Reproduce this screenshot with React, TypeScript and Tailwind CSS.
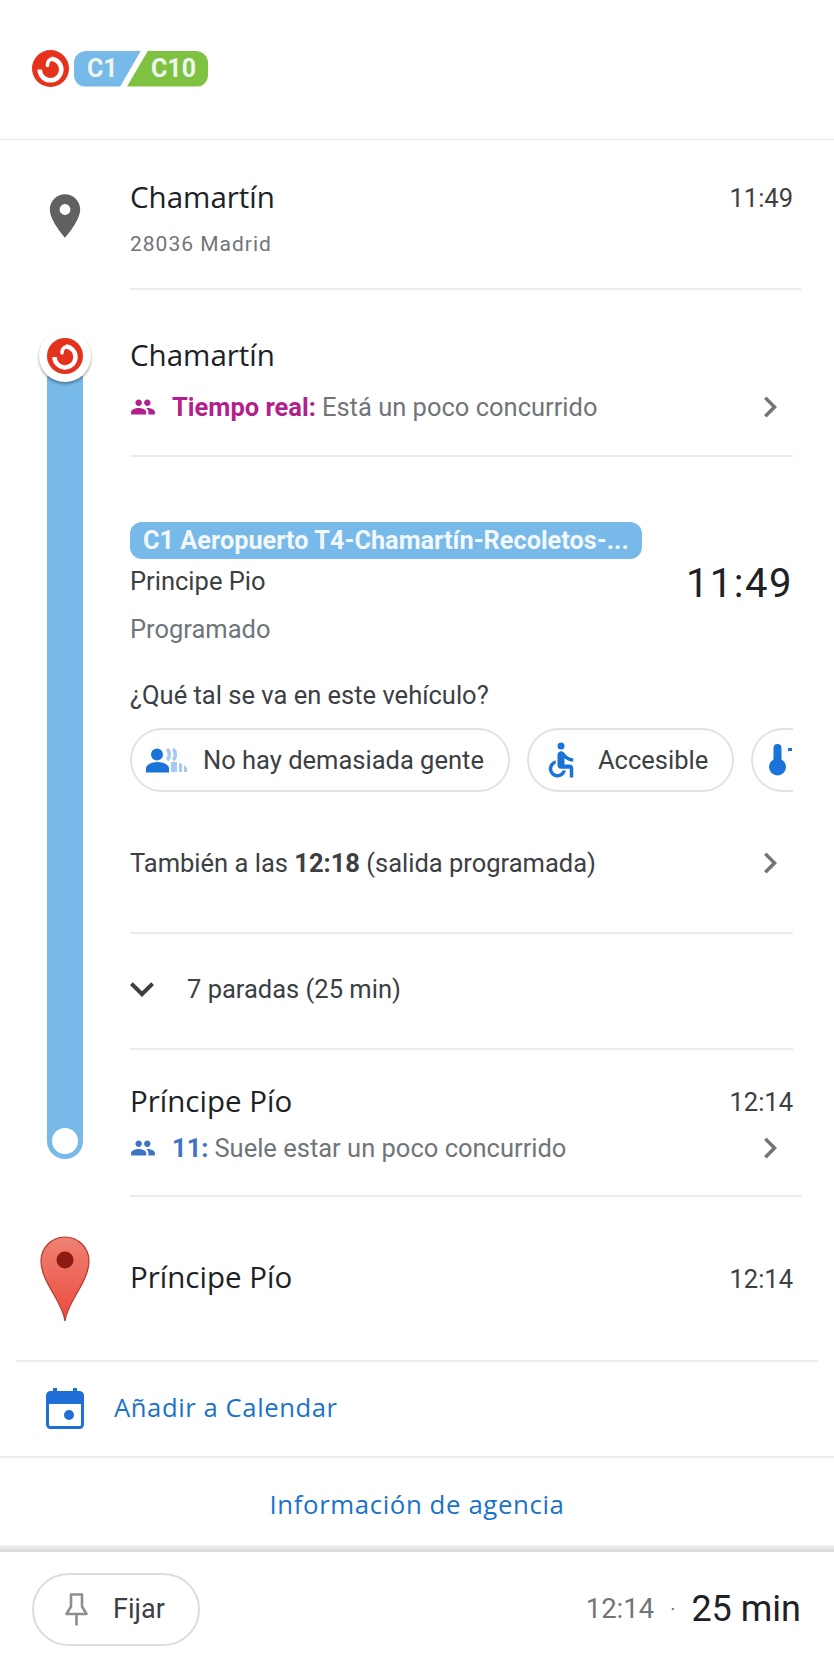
import { MdPeople, MdPlace, MdChevronRight, MdExpandMore, MdAccessible } from 'react-icons/md'

const roboto = { fontFamily: 'Roboto, sans-serif' }
const titleFont = { fontFamily: 'Open Sans, sans-serif' }

function LineLogo({ size }: { size: number }) {
  return (
    <svg width={size} height={size} viewBox="0 0 36 36" className="block shrink-0">
      <circle cx="18" cy="18" r="18" fill="#e4321c" />
      <path d="M7.500 19 A10.500 10.500 0 1 0 19 8.500" fill="none" stroke="#fff" strokeWidth="4.500" />
      <path d="M20 8.500 Q15 9.500 15 15" fill="none" stroke="#fff" strokeWidth="3.500" strokeLinecap="round" />
    </svg>
  )
}

function CrowdIcon() {
  return (
    <svg width="41" height="25" viewBox="0 0 41 25" className="shrink-0">
      <path d="M21 1c3 2 3 9 0 11M27 1c3 2 3 9 0 11" fill="none" stroke="#a6c8f2" strokeWidth="3.500" />
      <path d="M25 14h6v10h-6zM33 15l3 1v8h-3zM38 17l3 3v4h-3z" fill="#a6c8f2" />
      <circle cx="11" cy="6.500" r="6" fill="#1a73d8" />
      <path d="M0 24.500v-4c0-4 6-6.500 11.500-6.500s11.500 2.500 11.500 6.500v4z" fill="#1a73d8" />
    </svg>
  )
}

function ThermoIcon() {
  return (
    <svg width="24" height="32" viewBox="0 0 24 32" className="shrink-0">
      <rect x="4.500" y="0" width="8" height="22" rx="4" fill="#1a73d8" />
      <circle cx="8.500" cy="23" r="8.500" fill="#1a73d8" />
      <rect x="19" y="4" width="4" height="3" fill="#1a73d8" />
    </svg>
  )
}

function PinIcon() {
  return (
    <svg width="23" height="33" viewBox="0 0 23 33" className="shrink-0" fill="none" stroke="#8e8e8e" strokeWidth="2.600">
      <path d="M5 1.500h13M6 1.500v12l-4.500 7.500h20l-4.500-7.500v-12" strokeLinejoin="round" />
      <path d="M11.500 21v11.500" />
    </svg>
  )
}

function CalendarIcon() {
  return (
    <svg width="38" height="41" viewBox="0 0 38 41" className="shrink-0">
      <rect x="7" y="0" width="4" height="6" fill="#1f6fd6" />
      <rect x="27" y="0" width="4" height="6" fill="#1f6fd6" />
      <rect x="1.500" y="4.500" width="35" height="35" rx="3" fill="#fff" stroke="#1f6fd6" strokeWidth="3" />
      <path d="M1 8a4 4 0 0 1 4-4h28a4 4 0 0 1 4 4v8H1z" fill="#1f6fd6" />
      <circle cx="23" cy="27" r="5" fill="#1f6fd6" />
    </svg>
  )
}

function RedPin() {
  return (
    <svg width="50" height="86" viewBox="0 0 50 86" className="shrink-0">
      <defs>
        <linearGradient id="pinfill" x1="0" y1="0" x2="0" y2="1">
          <stop offset="0" stopColor="#ef8274" />
          <stop offset="1" stopColor="#ea4a3c" />
        </linearGradient>
      </defs>
      <path d="M25 85C23 66 1 46 1 25a24 24 0 0 1 48 0C49 46 27 66 25 85z" fill="url(#pinfill)" stroke="#b23a2c" strokeWidth="1.200" />
      <circle cx="25" cy="24" r="8.500" fill="#8e1b12" />
    </svg>
  )
}

export default function App() {
  return (
    <div className="flex h-[1666px] w-[834px] flex-col overflow-hidden bg-white" style={roboto}>
      {/* Route badges */}
      <div className="flex h-[140px] shrink-0 items-center border-b border-[#e6e6e6] pl-[32px] pb-[2px]">
        <LineLogo size={37} />
        <div className="ml-[5px] flex h-[36px] items-center text-[25px] font-bold text-[#eef6ee]">
          <div className="flex h-full w-[67px] items-center rounded-l-[12px] bg-[#77b9e8] pl-[13px] [clip-path:polygon(0_0,100%_0,69%_100%,0_100%)]">C1</div>
          <div className="-ml-[14px] flex h-full w-[81px] items-center rounded-r-[12px] bg-[#7fc241] pl-[24px] [clip-path:polygon(26%_0,100%_0,100%_100%,0_100%)]">C10</div>
        </div>
      </div>

      {/* Origin */}
      <div className="flex h-[150px] shrink-0">
        <div className="flex w-[130px] shrink-0 justify-center pt-[50px]">
          <MdPlace size={52} color="#616161" />
        </div>
        <div className="mr-[33px] flex-1 border-b-2 border-[#ebebeb] pr-[8px]">
          <div className="mt-[37px] flex items-center justify-between">
            <span className="text-[29.5px] leading-[36px] text-[#202124]" style={titleFont}>Chamartín</span>
            <span className="mt-[2px] text-[25.5px] text-[#3c4043]">11:49</span>
          </div>
          <div className="mt-[14px] text-[21px] leading-[26px] tracking-[1px] text-[#70757a]">28036 Madrid</div>
        </div>
      </div>

      {/* Transit leg */}
      <div className="flex h-[905px] shrink-0">
        <div className="flex w-[130px] shrink-0 flex-col items-center pt-[40px]">
          <div className="z-10 -mb-[6px] flex h-[52px] w-[52px] items-center justify-center rounded-full bg-white shadow-[0_2px_3px_rgba(0,0,0,0.35)]">
            <LineLogo size={36} />
          </div>
          <div className="flex h-[783px] w-[36px] flex-col items-center justify-end rounded-b-[18px] bg-[#77b9e8] pb-[5px]">
            <div className="h-[26px] w-[26px] rounded-full bg-white" />
          </div>
        </div>
        <div className="mr-[41px] flex min-w-0 flex-1 flex-col">
          {/* Boarding stop */}
          <div className="h-[167px] shrink-0 border-b-2 border-[#ebebeb]">
            <div className="mt-[46px] text-[29.5px] leading-[38px] text-[#202124]" style={titleFont}>Chamartín</div>
            <div className="mt-[17px] flex items-center text-[25.5px] leading-[32px] text-[#70757a]">
              <MdPeople size={26} color="#b31f8c" />
              <span className="ml-[16px] font-bold text-[#b31f8c]">Tiempo real:</span>
              <span className="ml-[6px]">Está un poco concurrido</span>
              <MdChevronRight size={42} color="#70757a" className="-my-[5px] mr-[2px] ml-auto" />
            </div>
          </div>

          {/* Vehicle details */}
          <div className="h-[477px] shrink-0 border-b-2 border-[#ebebeb]">
            <div className="mt-[65px] flex h-[37px] w-[512px] items-center rounded-[12px] bg-[#77b9e8] pl-[13px] text-[25.3px] font-bold whitespace-nowrap text-[#f2f8fc]">
              C1 Aeropuerto T4-Chamartín-Recoletos-...
            </div>
            <div className="flex items-center justify-between">
              <div>
                <div className="mt-[4px] text-[25.5px] leading-[36px] text-[#3c4043]">Principe Pio</div>
                <div className="mt-[12px] text-[25.5px] leading-[36px] text-[#70757a]">Programado</div>
              </div>
              <span className="-mt-[39px] text-[40px] tracking-[1.5px] text-[#202124]">11:49</span>
            </div>
            <div className="mt-[30px] text-[25.5px] leading-[36px] text-[#3c4043]">¿Qué tal se va en este vehículo?</div>
            <div className="mt-[15px] flex gap-[17px] overflow-hidden">
              <div className="flex h-[64px] shrink-0 items-center gap-[16px] rounded-full border-2 border-[#e2e3e4] pl-[14px] pr-[24px] text-[25.5px] text-[#3c4043]">
                <CrowdIcon />
                <span className="whitespace-nowrap">No hay demasiada gente</span>
              </div>
              <div className="flex h-[64px] shrink-0 items-center gap-[16px] rounded-full border-2 border-[#e2e3e4] pl-[11px] pr-[24px] text-[25.5px] text-[#3c4043]">
                <MdAccessible size={42} color="#1a73d8" />
                <span className="whitespace-nowrap">Accesible</span>
              </div>
              <div className="flex h-[64px] w-[120px] shrink-0 items-center rounded-full border-2 border-[#e2e3e4] pl-[16px]">
                <ThermoIcon />
              </div>
            </div>
            <div className="mt-[53px] flex items-center text-[25.5px] leading-[36px] text-[#3c4043]">
              <span>También a las <b className="font-bold">12:18</b> (salida programada)</span>
              <MdChevronRight size={42} color="#70757a" className="-my-[3px] mr-[2px] ml-auto" />
            </div>
          </div>

          {/* Intermediate stops */}
          <div className="flex h-[116px] shrink-0 items-center border-b-2 border-[#ebebeb] pb-[4px] text-[25.5px] text-[#3c4043]">
            <MdExpandMore size={48} color="#3c4043" className="-ml-[12px]" />
            <span className="ml-[21px]">7 paradas (25 min)</span>
          </div>

          {/* Alighting stop */}
          <div className="shrink-0">
            <div className="flex items-center justify-between pt-[30px]">
              <span className="text-[29.5px] leading-[36px] text-[#202124]" style={titleFont}>Príncipe Pío</span>
              <span className="mt-[3px] text-[25.5px] text-[#3c4043]">12:14</span>
            </div>
            <div className="mt-[11px] flex items-center text-[25.5px] leading-[32px] text-[#70757a]">
              <MdPeople size={26} color="#3f73c4" />
              <span className="ml-[16px] font-bold text-[#3f73c4]">11:</span>
              <span className="ml-[6px]">Suele estar un poco concurrido</span>
              <MdChevronRight size={42} color="#70757a" className="-my-[5px] mr-[2px] ml-auto" />
            </div>
          </div>
        </div>
      </div>

      {/* Destination */}
      <div className="flex h-[165px] shrink-0">
        <div className="flex w-[130px] shrink-0 justify-center pt-[41px]">
          <RedPin />
        </div>
        <div className="mr-[33px] flex flex-1 items-center justify-between border-t-2 border-[#ebebeb] pr-[8px] pb-[4px]">
          <span className="text-[29.5px] leading-[36px] text-[#202124]" style={titleFont}>Príncipe Pío</span>
          <span className="mt-[5px] text-[25.5px] text-[#3c4043]">12:14</span>
        </div>
      </div>

      {/* Calendar */}
      <div className="mx-[16px] flex h-[96px] shrink-0 items-center border-t-2 border-[#ebebeb] pl-[30px] pb-[1px]">
        <CalendarIcon />
        <span className="ml-[30px] text-[25.6px] tracking-[0.6px] text-[#1a73c8]" style={titleFont}>Añadir a Calendar</span>
      </div>

      {/* Agency */}
      <div className="flex h-[89px] shrink-0 items-center justify-center border-t-2 border-[#ebebeb] pt-[6px] text-[25.8px] tracking-[0.6px] text-[#1a73c8]" style={titleFont}>
        Información de agencia
      </div>

      {/* Bottom bar */}
      <div className="h-[7px] shrink-0 bg-gradient-to-b from-[#f2f2f2] to-[#d8d8d8]" />
      <div className="flex flex-1 items-center justify-between pl-[32px] pr-[33px]">
        <div className="flex h-[73px] items-center gap-[25px] rounded-full border-2 border-[#dadce0] pl-[31px] pr-[33px] text-[27px] text-[#3c4043]">
          <PinIcon />
          <span>Fijar</span>
        </div>
        <div className="flex items-center">
          <span className="text-[27.5px] text-[#70757a]">12:14</span>
          <span className="mx-[16px] text-[20px] text-[#70757a]">·</span>
          <span className="text-[36px] text-[#202124]">25 min</span>
        </div>
      </div>
    </div>
  )
}
